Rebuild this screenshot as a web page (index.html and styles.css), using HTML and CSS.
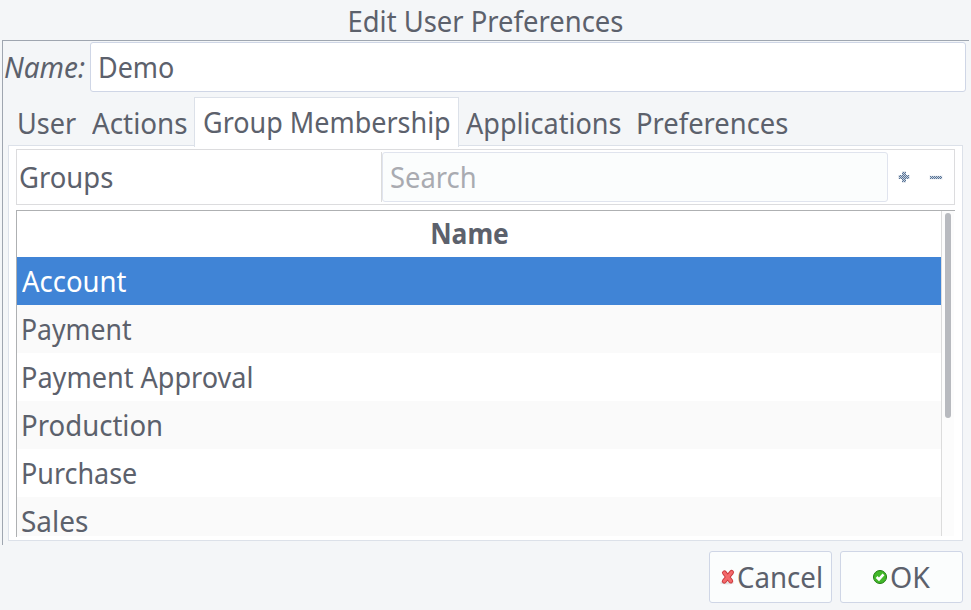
FILE: index.html
```html
<!DOCTYPE html>
<html lang="en">
<head>
<meta charset="utf-8">
<title>Edit User Preferences</title>
<link rel="stylesheet" href="styles.css">
</head>
<body>
<h1 class="title"><span class="t-title">Edit User Preferences</span></h1>
<main class="frame">
  <div class="name-row">
    <label class="name-label"><span class="t-label">Name:</span></label>
    <div class="entry"><span class="t-demo">Demo</span></div>
  </div>
  <nav class="tabs">
    <div class="tab tab-user"><span class="t-user">User</span></div>
    <div class="tab tab-actions"><span class="t-actions">Actions</span></div>
    <div class="tab active"><span class="t-gm">Group Membership</span></div>
    <div class="tab tab-apps"><span class="t-apps">Applications</span></div>
    <div class="tab tab-prefs"><span class="t-prefs">Preferences</span></div>
  </nav>
  <section class="panel">
    <div class="toolbar">
      <div class="groups"><span class="t-groups">Groups</span></div>
      <div class="search"><span class="t-search">Search</span></div>
      <svg class="icon-add" width="12" height="12" viewBox="0 0 12 12">
        <defs><pattern id="dither" width="2" height="2" patternUnits="userSpaceOnUse"><rect width="2" height="2" fill="#c9d3df"/><rect width="1" height="1" fill="#587396"/><rect x="1" y="1" width="1" height="1" fill="#587396"/></pattern></defs>
        <path d="M4 0h4v4h4v4h-4v4h-4v-4h-4v-4h4z" fill="#e6e9ed"/>
        <path d="M4 1h4v3h3v4h-3v3h-4v-3h-3v-4h3z" fill="url(#dither)"/>
      </svg>
      <svg class="icon-remove" width="14" height="5" viewBox="0 0 14 5">
        <path d="M0 0h14v5h-14z" fill="#f6f7f9"/><path d="M1 1h12v3h-12z" fill="url(#dither)"/>
      </svg>
    </div>
    <div class="tree">
      <div class="list">
        <div class="head"><span class="t-name">Name</span></div>
        <div class="row selected"><span class="t-account">Account</span></div>
        <div class="row odd"><span class="t-payment">Payment</span></div>
        <div class="row"><span class="t-approval">Payment Approval</span></div>
        <div class="row odd"><span class="t-production">Production</span></div>
        <div class="row"><span class="t-purchase">Purchase</span></div>
        <div class="row odd"><span class="t-sales">Sales</span></div>
      </div>
      <div class="scrollbar"><div class="thumb"></div></div>
    </div>
  </section>
</main>
<footer class="actions">
  <button class="button cancel" type="button">
    <svg class="icon" width="16" height="16" viewBox="0 0 16 16">
      <ellipse cx="7" cy="14" rx="7" ry="1.5" fill="#e3e3e3"/>
      <path d="M4.4 3.8L10.8 12M11.6 3.4L4.2 12.2" stroke="#c9383c" stroke-width="4.8" stroke-linecap="round"/>
      <path d="M4.4 3.8L10.8 12M11.6 3.4L4.2 12.2" stroke="#f3696b" stroke-width="3" stroke-linecap="round"/>
    </svg>
    <span class="t-cancel">Cancel</span>
  </button>
  <button class="button ok" type="button">
    <svg class="icon" width="16" height="16" viewBox="0 0 16 16">
      <circle cx="8" cy="8" r="6.5" fill="#42b82a" stroke="#207c12" stroke-width="1"/>
      <path d="M4.6 8L7 10.4L11.5 5.4" fill="none" stroke="#fff" stroke-width="2.6"/>
    </svg>
    <span class="t-ok">OK</span>
  </button>
</footer>
</body>
</html>
```
FILE: styles.css
```css
* { box-sizing: border-box; }
body {
  margin: 0;
  width: 971px;
  height: 610px;
  overflow: hidden;
  background: #f4f6f8;
  color: #5c616c;
  font: 28.5px/40px "Noto Sans", sans-serif;
  white-space: nowrap;
}
span { display: inline-block; transform-origin: 0 50%; }
.title { margin: 0; height: 40px; font-size: inherit; font-weight: 400; text-align: center; line-height: 42px; }
.frame { margin-left: 2px; width: 967px; height: 505px; border-top: 1px solid #9fa6b0; border-left: 1px solid #9fa6b0; padding-top: 1px; }
.name-row { display: flex; height: 50px; }
.name-label { width: 87px; padding-left: 1px; font-style: italic; line-height: 50px; }
.entry { width: 876px; height: 50px; border: 1px solid #cfd6e6; border-radius: 3px; background: #fff; padding-left: 7px; line-height: 48px; }
.tabs { display: flex; height: 54px; padding: 5px 0 0 14px; margin-bottom: -1px; position: relative; }
.tab { height: 49px; line-height: 52px; }
.tab-user { width: 75px; }
.tab-actions { width: 102px; }
.tab.active { width: 265px; border: 1px solid #dce1e9; border-bottom: 0; background: #fff; padding-left: 8px; line-height: 49px; height: 50px; }
.tab-apps { width: 177px; padding-left: 7px; }
.panel { margin-left: 5px; width: 955px; height: 396px; border: 1px solid #dce1e9; background: #fff; padding: 3px 7px 4px; }
.toolbar { display: flex; width: 939px; height: 56px; border: 1px solid #dcdcde; padding: 2px 0; margin-bottom: 5px; align-items: center; }
.groups { width: 365px; height: 50px; line-height: 50px; border-right: 1px solid #dcdcdc; padding-left: 2px; }
.search { width: 506px; height: 50px; line-height: 48px; border: 1px solid #e0e4ee; border-radius: 3px; background: #fbfdfd; color: #a9abb1; padding-left: 7px; }
.icon-add { margin-left: 10px; }
.icon-remove { margin-left: 19px; }
.tree { display: flex; width: 939px; height: 327px; border-top: 1px solid #aeb0b2; border-left: 1px solid #aeb0b2; }
.list { width: 925px; height: 325px; overflow: hidden; border-right: 1px solid #dcdcdc; }
.head { height: 46px; line-height: 45px; font-weight: 700; text-align: center; padding-right: 18px; }
.row { height: 48px; line-height: 48px; padding-left: 4px; }
.row.odd { background: #fafafa; }
.row.selected { background: #4084d6; color: #fff; padding-left: 5px; }
.scrollbar { width: 12px; height: 325px; background: #fcfcfc; padding: 2px 0 0 3px; }
.thumb { width: 6px; height: 205px; border-radius: 3px; background: #b8babf; }
.actions { display: flex; gap: 8px; padding: 6px 0 0 709px; }
.button { width: 123px; height: 52px; display: flex; align-items: center; padding: 0; border: 1px solid #cfd6e6; border-radius: 3px; background: #fbfdfd; font: inherit; color: inherit; }
.cancel { padding-left: 10px; }
.ok { padding-left: 31px; }
.icon { flex: none; }

/* Condensed glyph widths */
.t-title { transform: scaleX(.962); transform-origin: 50% 50%; }
.t-label { transform: scaleX(.98); }
.t-demo { transform: scaleX(.945); }
.t-user { transform: scaleX(.95); }
.t-actions { transform: scaleX(.975); }
.t-gm { transform: scaleX(.946); }
.t-apps { transform: scaleX(.949); }
.t-prefs { transform: scaleX(.96); }
.t-groups { transform: scaleX(.963); }
.t-search { transform: scaleX(.96); }
.t-name { transform: scaleX(.925); transform-origin: 50% 50%; }
.t-account { transform: scaleX(.965); }
.t-payment { transform: scaleX(.934); }
.t-approval { transform: scaleX(.95); }
.t-production { transform: scaleX(.967); }
.t-purchase { transform: scaleX(.945); }
.t-sales { transform: scaleX(.98); }
.t-cancel { transform: scaleX(.97); margin-left: 1px; }
.t-ok { margin-left: 2px; }
```
